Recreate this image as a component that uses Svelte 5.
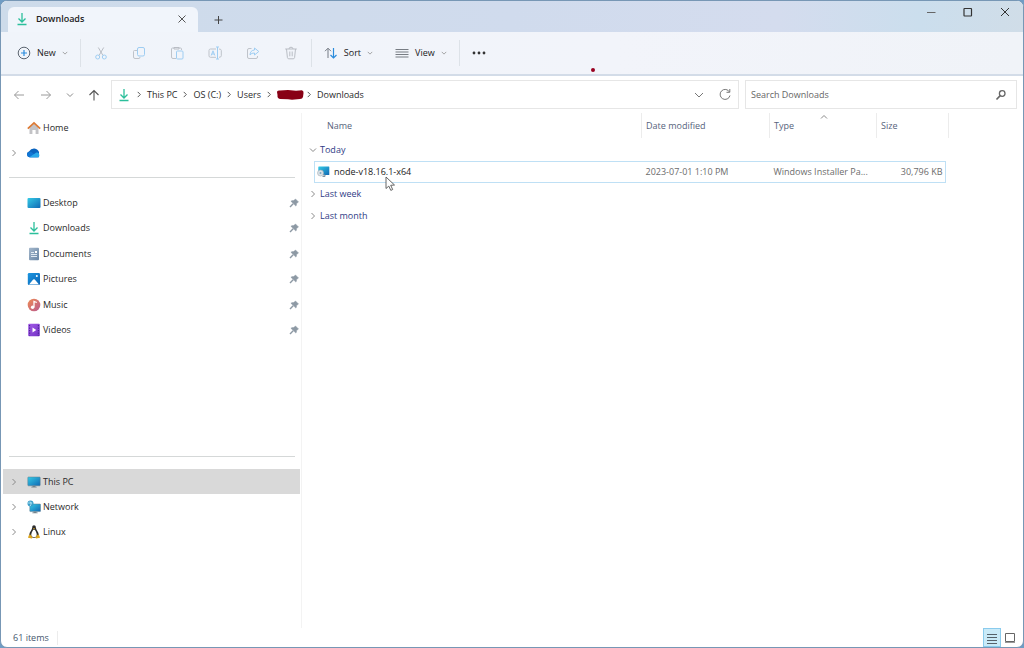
<script lang="ts">
	const pinned = [
		{ name: 'Desktop', icon: 'desktop' },
		{ name: 'Downloads', icon: 'download' },
		{ name: 'Documents', icon: 'document' },
		{ name: 'Pictures', icon: 'picture' },
		{ name: 'Music', icon: 'music' },
		{ name: 'Videos', icon: 'video' }
	];

	const devices = [
		{ name: 'This PC', icon: 'pc' },
		{ name: 'Network', icon: 'network' },
		{ name: 'Linux', icon: 'linux' }
	];

	const tools = [
		{ name: 'Cut', icon: 'cut' },
		{ name: 'Copy', icon: 'copy' },
		{ name: 'Paste', icon: 'paste' },
		{ name: 'Rename', icon: 'rename' },
		{ name: 'Share', icon: 'share' },
		{ name: 'Delete', icon: 'trash' }
	];

	const groups = [
		{
			name: 'Today',
			files: [
				{
					name: 'node-v18.16.1-x64',
					modified: '2023-07-01 1:10 PM',
					type: 'Windows Installer Pa...',
					size: '30,796 KB'
				}
			]
		},
		{ name: 'Last week', files: [] },
		{ name: 'Last month', files: [] }
	];

	const crumbs = ['This PC', 'OS (C:)', 'Users', '', 'Downloads'];

	let selected = $state('This PC');
	let search = $state('');
</script>

{#snippet chevron(dir: string)}
	<svg class="chev {dir}" width="8" height="8" viewBox="0 0 8 8"><path d="M2.5 1 5.5 4 2.5 7" /></svg>
{/snippet}

{#snippet icon(name: string)}
	<svg class="icon" width="14" height="14" viewBox="0 0 14 14" fill="none">
		{#if name === 'download'}
			<path d="M7 1v8.500M3.500 6.500 7 10l3.500-3.500M2.500 12.500h9" stroke="#2bbf9b" stroke-width="1.300" />
		{:else if name === 'home'}
			<path d="M2.500 6.500 7 2.500l4.500 4v6.500H8.600V9H5.400v4H2.500z" fill="#c3c3c6" />
			<path d="M.8 7.600 7 1.800l6.200 5.800" stroke="#dd7a35" stroke-width="1.700" />
		{:else if name === 'cloud'}
			<path d="M2.500 11.300A3 3 0 0 1 2 5.500Q4 2.200 7.500 2.500 11 3 12 6v5.300z" fill="#0a63be" />
			<path d="M.2 8.500C.2 6.300 3 5 5 6.500l6 4.800H3C1.200 11.300.2 10.200.2 8.500z" fill="#1076d4" />
			<path d="M2.300 11.200 9 6.700c1.800-.8 3.300.4 3.300 2.500 0 1.300-.7 2.100-1.700 2.100H3z" fill="#28a8ea" />
		{:else if name === 'desktop'}
			<rect x=".5" y="2" width="13" height="10" rx="1" fill="url(#blue)" />
		{:else if name === 'document'}
			<rect x="2" y=".8" width="10" height="12.500" rx="1" fill="url(#slate)" />
			<path d="M4 5.500h3M4 7.500h6M4 9.500h6" stroke="#e9f0f7" stroke-width=".9" />
			<rect x="8" y="4" width="2" height="2" fill="#fff" />
		{:else if name === 'picture'}
			<rect x=".8" y="1" width="12.200" height="12" rx="1.300" fill="url(#photo)" />
			<path d="M2 12.400 6.200 7.600q.8-.8 1.600 0L12 12.400z" fill="#fff" />
			<circle cx="9.800" cy="3.900" r="1" fill="#fff" />
		{:else if name === 'music'}
			<circle cx="7" cy="7" r="6.300" fill="url(#tune)" />
			<path d="M7 9.300V3.500l2.800 1" stroke="#fff" stroke-width="1.300" />
			<circle cx="5.600" cy="9.200" r="1.700" fill="#fff" />
		{:else if name === 'video'}
			<rect x="1.200" y=".8" width="11.600" height="12.400" rx="1" fill="url(#film)" />
			<path d="M2.600 2v10.500M11.400 2v10.500" stroke="#4a1e92" stroke-width="1.100" stroke-dasharray="1.300 1.200" />
			<path d="M5.500 4.600v4.800L9.300 7z" fill="#fff" />
		{:else if name === 'pc'}
			<rect x=".8" y="2" width="12.400" height="8.800" rx=".7" fill="url(#blue)" stroke="#5f7c8c" stroke-width=".5" />
			<path d="M5.500 10.800h3v1h1.200v.8H4.300v-.8h1.200z" fill="#75838c" />
		{:else if name === 'network'}
			<rect x="2.800" y="4" width="10.700" height="7.600" rx=".6" fill="url(#blue)" stroke="#5f7c8c" stroke-width=".5" />
			<path d="M6.500 11.600h3v.8h1.200v.8H5.300v-.8h1.200z" fill="#75838c" />
			<circle cx="3.500" cy="3.500" r="3" fill="#399dc9" />
			<path d="M2.500 1.200c2 1 2 3 .5 5M.7 3h4.500" stroke="#b5e5f5" stroke-width=".9" />
		{:else if name === 'linux'}
			<path d="M5.200 2.700C5.200 1 6 .3 7 .3s1.900.7 1.900 2.400c0 2 2.900 4 2.900 7 0 2-2 3-4.800 3S2.300 11.700 2.300 9.700c0-3 2.900-5 2.900-7z" fill="#2d2d2d" />
			<path d="M7 4.500c1 0 2.700 3.200 2.700 5.300S8.500 12 7 12s-2.700-.3-2.700-2.200S6 4.500 7 4.500z" fill="#fff" />
			<path d="M5.800 3.200h2.400L7 4.600zM3 9.200l2.700 3.300-.9 1.100-3.800-.8.600-2zM11 9.200l-2.700 3.300.9 1.100 3.800-.8-.6-2z" fill="#dda51d" />
		{:else if name === 'installer'}
			<rect x="1.300" y="1.500" width="11" height="8.500" rx=".5" fill="url(#blue)" />
			<path d="M6 10h2v1.500H5.500" stroke="#8195a3" />
			<circle cx="3.500" cy="8" r="3" fill="#dce3e8" stroke="#a6b0b8" stroke-width=".6" />
			<circle cx="3.500" cy="8" r="1" fill="#7faac4" />
		{:else if name === 'cut'}
			<path d="M4.300 1.500 9 9.500M9.700 1.500 5 9.500" stroke="#b9bdc4" />
			<circle cx="3.700" cy="11" r="2" stroke="#9ecdf2" />
			<circle cx="10.300" cy="11" r="2" stroke="#9ecdf2" />
		{:else if name === 'copy'}
			<path d="M5 4.500H2.500q-1 0-1 1v5.500q0 1.500 1.500 1.500h4q1 0 1-1.500" stroke="#bfc3ca" />
			<rect x="5.500" y="1.500" width="7" height="8.500" rx="1.500" stroke="#9ecdf2" />
		{:else if name === 'paste'}
			<path d="M6 12.500H3q-1.500 0-1.500-1.500V3q0-1 1-1H4M9 2h1.500q1 0 1 1v1" stroke="#bfc3ca" />
			<path d="M4 1.500h5v1.500H4z" stroke="#b9bdc4" />
			<rect x="6.500" y="5" width="6.500" height="8" rx="1" stroke="#9ecdf2" />
		{:else if name === 'rename'}
			<path d="M8 3H2.500Q1 3 1 4.500v5.300Q1 11.300 2.500 11.300H8M11 3q2.300 0 2.300 1.500v5.300q0 1.500-2.300 1.500" stroke="#bfc3ca" />
			<path d="M3.200 9.500 5 4.800l1.800 4.700M3.900 8h2.200M9.500 1v12M8 1h3M8 13h3" stroke="#9ecdf2" />
		{:else if name === 'share'}
			<path d="M5.500 2.500H3Q1.500 2.500 1.500 4v7q0 1.500 1.500 1.500h7q1.500 0 1.500-1.500v-1" stroke="#bfc3ca" />
			<path d="M8.500 2 12.800 5.500 8.500 9V7Q5.500 6.700 4 9 4.200 4.300 8.500 4z" stroke="#9ecdf2" stroke-linejoin="round" />
		{:else if name === 'trash'}
			<path d="M1.200 3h11.600M5 3q0-1.800 2-1.800T9 3M2.500 3l.9 8.500q.2 1.300 1.400 1.300h4.400q1.200 0 1.400-1.300L11.500 3M5.800 5.500v4.800M8.200 5.500v4.800" stroke="#b9bdc4" />
		{:else if name === 'new'}
			<circle cx="7" cy="7" r="5.800" stroke="#5c6570" />
			<path d="M7 4v6M4 7h6" stroke="#2b8bdc" stroke-width="1.200" />
		{:else if name === 'sort'}
			<path d="M4 12V2.500M1 5.200l3-3 3 3" stroke="#757b84" />
			<path d="M9.500 2v9.500M6.500 9l3 3 3-3" stroke="#2b8bdc" stroke-width="1.200" />
		{:else if name === 'view'}
			<path d="M.5 3.500h13M.5 6h13M.5 8.500h13M.5 11h13" stroke="#777c83" />
		{:else if name === 'more'}
			<circle cx="2" cy="7" r="1.400" fill="#333" />
			<circle cx="7" cy="7" r="1.400" fill="#333" />
			<circle cx="12" cy="7" r="1.400" fill="#333" />
		{:else if name === 'left'}
			<path d="M12 7H2.500M6.500 3l-4 4 4 4" stroke="#9a9a9a" />
		{:else if name === 'right'}
			<path d="M2 7h9.500M7.500 3l4 4-4 4" stroke="#9a9a9a" />
		{:else if name === 'up'}
			<path d="M7 12.500V2.500M2.500 7 7 2.500 11.500 7" stroke="#555" stroke-width="1.100" />
		{:else if name === 'refresh'}
			<path d="M11.500 4A5 5 0 1 0 12 7.500M11.800 1v3.300H8.500" stroke="#777" />
		{:else if name === 'magnifier'}
			<circle cx="8.200" cy="5.500" r="2.800" stroke="#666" stroke-width="1.300" />
			<path d="M6.200 7.600 2.500 11.500" stroke="#666" stroke-width="1.600" />
		{:else if name === 'pin'}
			<path d="M9.500 3 12.500 6l-1 .8-1 .8q.1 1.700-.6 2.500L4.900 5.200q1-.8 2.700-.6l1-.8z" fill="#8d99a4" stroke="#8d99a4" stroke-width=".5" />
			<path d="M7.200 7.800 4 11" stroke="#8d99a4" stroke-width="1.400" />
		{:else if name === 'close'}
			<path d="m3 3 8 8M11 3l-8 8" stroke="#333" />
		{:else if name === 'closetab'}
			<path d="m3.500 3.500 7 7M10.500 3.500l-7 7" stroke="#555" />
		{:else if name === 'plus'}
			<path d="M7.500 3v8M3.500 7h8" stroke="#444" />
		{:else if name === 'minimize'}
			<path d="M3 7.500h8.500" stroke="#666" />
		{:else if name === 'maximize'}
			<rect x="3" y="3.500" width="7.500" height="7.500" rx=".5" stroke="#333" stroke-width="1.200" />
		{:else if name === 'details'}
			<path d="M2 3.500h10M2 6.500h10M2 9.500h10M2 12.500h10" stroke="#55616a" />
		{:else if name === 'tiles'}
			<path d="M2.500 2.500h9v8h-9z" stroke="#666" />
			<path d="M2 11.500h10" stroke="#999" />
		{/if}
	</svg>
{/snippet}

<svg class="defs" width="0" height="0" aria-hidden="true">
	<defs>
		<linearGradient id="blue" x2="1" y2="1"><stop stop-color="#35cbe6" /><stop offset="1" stop-color="#1068b4" /></linearGradient>
		<linearGradient id="slate" x2="1" y2="1"><stop stop-color="#a4b7cb" /><stop offset="1" stop-color="#6785a5" /></linearGradient>
		<linearGradient id="photo" x2="1" y2="1"><stop stop-color="#1c96e0" /><stop offset="1" stop-color="#0964b6" /></linearGradient>
		<linearGradient id="tune" x2="1" y2="1"><stop stop-color="#ef8b52" /><stop offset="1" stop-color="#b85a91" /></linearGradient>
		<linearGradient id="film" x2="1" y2="1"><stop stop-color="#a45be8" /><stop offset="1" stop-color="#7132c4" /></linearGradient>
	</defs>
</svg>

<div class="window">
	<header class="titlebar">
		<div class="tab">
			{@render icon('download')}
			<span>Downloads</span>
			<button aria-label="Close tab">{@render icon('closetab')}</button>
		</div>
		<button class="add" aria-label="New tab">{@render icon('plus')}</button>
		<div class="controls">
			<button aria-label="Minimize">{@render icon('minimize')}</button>
			<button aria-label="Maximize">{@render icon('maximize')}</button>
			<button aria-label="Close">{@render icon('close')}</button>
		</div>
	</header>

	<div class="toolbar">
		<button class="labelled">{@render icon('new')} New {@render chevron('down')}</button>
		<div class="tools">
			{#each tools as tool}
				<button aria-label={tool.name} disabled>{@render icon(tool.icon)}</button>
			{/each}
		</div>
		<button class="labelled">{@render icon('sort')} Sort {@render chevron('down')}</button>
		<button class="labelled view">{@render icon('view')} View {@render chevron('down')}</button>
		<button class="more" aria-label="See more">{@render icon('more')}</button>
		<i class="dot"></i>
	</div>

	<div class="location">
		<nav class="history">
			<button aria-label="Back">{@render icon('left')}</button>
			<button aria-label="Forward">{@render icon('right')}</button>
			<button class="recent" aria-label="Recent locations">{@render chevron('down')}</button>
			<button aria-label="Up">{@render icon('up')}</button>
		</nav>
		<div class="address">
			{@render icon('download')}
			{#each crumbs as crumb}
				{@render chevron('dark')}
				{#if crumb}
					<a href="#{crumb}">{crumb}</a>
				{:else}
					<svg class="scribble" width="24" height="12" viewBox="0 0 24 12">
						<path d="M0 3Q0 1 3 1.500L11 1l8 .7 6-.5q2 .8 1.500 3L26 8q-.5 2-3 2l-8 .7-4-.4-8-.3Q0 9.500.5 6z" fill="#880015" />
					</svg>
				{/if}
			{/each}
			<button class="expand" aria-label="Previous locations">
				<svg width="10" height="8" viewBox="0 0 10 8" fill="none"><path d="m1 2 4 4 4-4" stroke="#777" /></svg>
			</button>
			<button aria-label="Refresh">{@render icon('refresh')}</button>
		</div>
		<label class="search">
			<input type="text" placeholder="Search Downloads" aria-label="Search Downloads" bind:value={search} />
			{@render icon('magnifier')}
		</label>
	</div>

	<div class="body">
		<aside>
			<ul>
				<li><button><i class="arrow"></i>{@render icon('home')}<span>Home</span></button></li>
				<li>
					<button aria-label="OneDrive"><i class="arrow">{@render chevron('side')}</i>{@render icon('cloud')}</button>
				</li>
			</ul>
			<hr />
			<ul class="pinned">
				{#each pinned as item}
					<li>
						<button>
							<i class="arrow"></i>{@render icon(item.icon)}<span>{item.name}</span>{@render icon('pin')}
						</button>
					</li>
				{/each}
			</ul>
			<hr />
			<ul>
				{#each devices as item}
					<li>
						<button class:selected={selected === item.name} onclick={() => (selected = item.name)}>
							<i class="arrow">{@render chevron('side')}</i>{@render icon(item.icon)}<span>{item.name}</span>
						</button>
					</li>
				{/each}
			</ul>
		</aside>

		<main>
			<table>
				<thead>
					<tr>
						<th>Name</th>
						<th class="date">Date modified</th>
						<th class="type">Type <i class="sorted">{@render chevron('top')}</i></th>
						<th class="size">Size</th>
					</tr>
				</thead>
				{#each groups as group}
					<tbody>
						<tr class="group">
							<td colspan="4">
								<button>{@render chevron(group.files.length ? 'down' : 'side')}{group.name}</button>
							</td>
						</tr>
						{#each group.files as file}
							<tr class="file">
								<td>
									<div class="name">{@render icon('installer')}{file.name}</div>
									<svg class="cursor" width="12" height="16" viewBox="0 0 12 16">
										<path d="M1 1v11.500l2.800-2.400 2 4.300 1.900-.9-2-4.200 3.800-.3z" fill="#fff" stroke="#555" stroke-width=".9" />
									</svg>
								</td>
								<td>{file.modified}</td>
								<td>{file.type}</td>
								<td class="amount">{file.size}</td>
							</tr>
						{/each}
					</tbody>
				{/each}
			</table>
		</main>
	</div>

	<footer>
		<span>61 items</span>
		<div class="views">
			<button class="active" aria-label="Details">{@render icon('details')}</button>
			<button aria-label="Large icons">{@render icon('tiles')}</button>
		</div>
	</footer>
</div>

<style>
	:global(body) {
		margin: 0;
		background: #6f9cc4;
	}

	.window {
		display: flex;
		flex-direction: column;
		box-sizing: border-box;
		min-height: 100vh;
		border: 1px solid #7797b5;
		border-radius: 7px;
		overflow: hidden;
		background: #fff;
		font-family: 'Open Sans', 'Noto Sans', sans-serif;
		font-size: 9px;
		line-height: 14px;
		color: #2a2a2a;
	}

	.defs {
		position: absolute;
	}

	button {
		display: flex;
		align-items: center;
		justify-content: center;
		padding: 0;
		border: 0;
		background: none;
		font: inherit;
		color: inherit;
	}

	ul {
		list-style: none;
		margin: 0;
		padding: 0;
	}

	svg {
		flex: none;
	}

	.chev {
		fill: none;
		stroke: #8a8a8a;
	}

	.chev.down {
		transform: rotate(90deg);
	}

	.chev.top {
		transform: rotate(-90deg);
	}

	.chev.dark {
		stroke: #444;
	}

	.titlebar {
		display: flex;
		height: 31px;
		background: linear-gradient(90deg, #cddbea, #d0dbed 50%, #d4dcee 76%, #cbdeed 90%, #d0dde8);
	}

	.tab {
		display: flex;
		align-items: center;
		box-sizing: border-box;
		width: 190px;
		margin: 6px 0 0 7px;
		padding: 0 9px 2px 7px;
		border-radius: 6px 6px 0 0;
		background: #f1f5fb;
		font-weight: 600;
		color: #222;
	}

	.tab span {
		flex: 1;
		margin-left: 7px;
	}

	.add {
		margin: 6px 0 0 13px;
	}

	.controls {
		display: flex;
		height: 22px;
		margin-left: auto;
	}

	.controls button {
		width: 37px;
	}

	.toolbar {
		display: flex;
		align-items: center;
		position: relative;
		height: 42px;
		padding-left: 16px;
		border-bottom: 2px solid #d3dce8;
		background: linear-gradient(90deg, #f0f4fa, #f2f4fa 60%, #f0f3f8);
	}

	.labelled {
		gap: 6px;
		color: #1a1a1a;
	}

	.labelled .chev {
		width: 6px;
	}

	.tools {
		display: flex;
		gap: 10px;
		margin: 0 12px;
		padding: 0 6px;
		border: solid #dde2e8;
		border-width: 0 1px;
	}

	.tools button {
		width: 28px;
		height: 28px;
	}

	.view {
		margin-left: 22px;
	}

	.more {
		height: 26px;
		margin-left: 12px;
		padding-left: 12px;
		border-left: 1px solid #dde2e8;
	}

	.dot {
		position: absolute;
		left: 590px;
		bottom: 2px;
		width: 4px;
		height: 4px;
		border-radius: 50%;
		background: #990020;
	}

	.location {
		display: flex;
		gap: 6px;
		height: 29px;
		padding: 4px 6px 4px 11px;
	}

	.history {
		display: flex;
		gap: 13px;
		width: 93px;
	}

	.history .recent {
		width: 8px;
	}

	.address,
	.search {
		display: flex;
		align-items: center;
		box-sizing: border-box;
		border: 1px solid #e6e6e6;
	}

	.address {
		flex: 1;
		gap: 4px;
		padding: 0 6px 0 5px;
	}

	.address .chev {
		height: 7px;
	}

	.address a {
		color: inherit;
		text-decoration: none;
	}

	.scribble {
		overflow: visible;
	}

	.expand {
		margin-left: auto;
		margin-right: 10px;
	}

	.search {
		width: 272px;
		padding: 0 8px 0 5px;
	}

	.search input {
		flex: 1;
		min-width: 0;
		padding: 0;
		border: 0;
		outline: 0;
		font: inherit;
		color: #444;
	}

	.search input::placeholder {
		color: #666;
	}

	.body {
		display: flex;
		flex: 1;
	}

	aside {
		box-sizing: border-box;
		width: 301px;
		padding: 2px 1px 0 2px;
		border-right: 1px solid #f3f3f3;
	}

	aside ul {
		display: grid;
	}

	aside button {
		justify-content: flex-start;
		width: 100%;
		height: 100%;
		min-height: 25px;
	}

	.arrow {
		display: flex;
		width: 17px;
		padding-left: 7px;
	}

	aside span {
		flex: 1;
		margin-left: 2px;
		text-align: left;
	}

	.pinned {
		min-height: 153px;
		margin-bottom: 113px;
	}

	hr {
		height: 1px;
		margin: 12px 5px 12px 6px;
		border: 0;
		background: #d5d8d8;
	}

	.selected {
		background: #d9d9d9;
	}

	main {
		flex: 1;
		min-width: 0;
		padding-right: 74px;
	}

	table {
		width: 100%;
		border-collapse: collapse;
		table-layout: fixed;
	}

	th {
		position: relative;
		height: 25px;
		padding: 0 4px;
		border-right: 1px solid #ececec;
		font-weight: 400;
		text-align: left;
		color: #56637c;
	}

	th:first-child {
		padding-left: 25px;
	}

	.date {
		width: 119px;
	}

	.type {
		width: 98px;
	}

	.size {
		width: 63px;
	}

	.sorted {
		display: flex;
		position: absolute;
		top: 0;
		left: 50px;
	}

	td {
		padding: 0 4px;
		color: #6c6c6c;
	}

	.group td {
		height: 22px;
		padding: 0 7px;
	}

	.group button {
		gap: 3px;
		color: #303c86;
	}

	tbody:first-of-type .group td {
		height: 23px;
	}

	.file {
		position: relative;
	}

	.file td {
		height: 22px;
		white-space: nowrap;
	}

	.file td:first-child::after {
		content: '';
		position: absolute;
		inset: 0 3px 0 12px;
		border: 1px solid #bfe0f5;
	}

	.name {
		display: flex;
		gap: 3px;
		margin-left: 11px;
		color: #222;
	}

	.cursor {
		position: absolute;
		left: 83px;
		top: 15px;
		z-index: 1;
	}

	.file .amount {
		padding-right: 6px;
		text-align: right;
	}

	footer {
		display: flex;
		align-items: center;
		justify-content: space-between;
		height: 19px;
		padding: 0 4px 0 12px;
		color: #45566e;
	}

	footer span {
		padding-right: 8px;
		border-right: 1px solid #ececec;
	}

	.views {
		display: flex;
	}

	.views button {
		box-sizing: border-box;
		width: 18px;
		height: 19px;
	}

	.views .active {
		border: 1px solid #8acbed;
		background: #c9eaf8;
	}
</style>
